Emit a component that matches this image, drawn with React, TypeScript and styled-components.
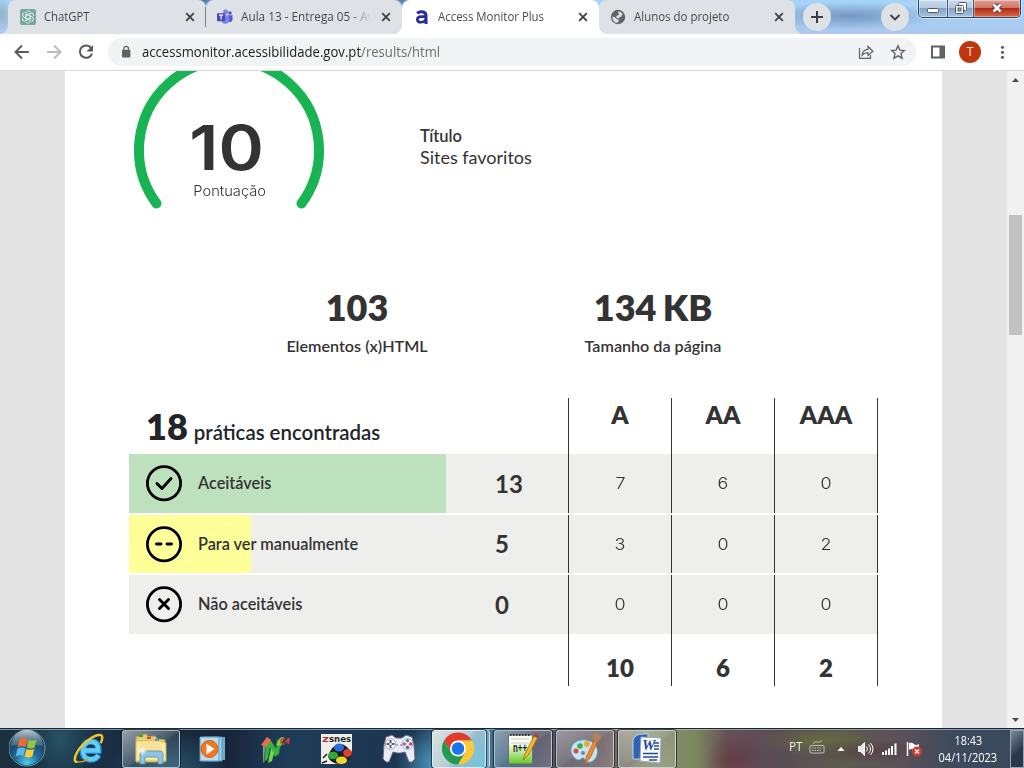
import React from "react";
import styled, { createGlobalStyle, css } from "styled-components";

const GlobalStyle = createGlobalStyle`
  * { box-sizing: border-box; }
  body { margin: 0; overflow: hidden; background: #fff; }
  svg { display: block; flex: none; }
`;

const ui = `"Open Sans", "Noto Sans", sans-serif`;
const lato = `Lato, sans-serif`;
const geo = `Inter, sans-serif`;

const Screen = styled.div`
  width: 1024px;
  height: 768px;
  display: flex;
  flex-direction: column;
  overflow: hidden;
  font-family: ${ui};
`;

/* Text squeezed or stretched horizontally around its origin */
const Fit = styled.span<{ $x: number; $origin?: string }>`
  display: inline-block;
  white-space: nowrap;
  transform: scaleX(${(p) => p.$x});
  transform-origin: ${(p) => p.$origin ?? "left"} center;
`;

/* ---------- Tab strip ---------- */
const TabStrip = styled.header`
  height: 34px;
  flex: none;
  display: flex;
  padding-left: 8px;
  background:
    radial-gradient(ellipse 90px 14px at 850px 16px, rgba(98, 131, 178, 0.75), transparent),
    radial-gradient(ellipse 14px 16px at 1px 14px, rgba(140, 165, 175, 0.7), transparent),
    radial-gradient(ellipse 12px 10px at 205px 0, #4d6f9f, transparent),
    radial-gradient(ellipse 12px 10px at 402px 0, #5277a8, transparent),
    linear-gradient(#a5d4f8, #abc9ee);
`;

const Tab = styled.div<{ $w: number; $pl?: number; $active?: boolean; $flare?: "left" | "right"; $sep?: boolean }>`
  position: relative;
  width: ${(p) => p.$w}px;
  height: 34px;
  display: flex;
  align-items: center;
  padding: 0 11px 0 ${(p) => p.$pl ?? 12}px;
  gap: 8px;
  font-size: 12px;
  color: #45494d;
  background: ${(p) => (p.$active ? "#fff" : "#dee1e6")};
  border-radius: 8px 8px 0 0;
  ${(p) =>
    p.$flare &&
    css`
      &::before {
        content: "";
        position: absolute;
        bottom: 0;
        ${p.$flare}: -8px;
        width: 8px;
        height: 8px;
        background: radial-gradient(circle at ${p.$flare === "left" ? "0 0" : "100% 0"}, transparent 7.5px, #dee1e6 8px);
      }
    `}
  ${(p) =>
    p.$active &&
    css`
      &::before,
      &::after {
        content: "";
        position: absolute;
        bottom: 0;
        width: 8px;
        height: 8px;
      }
      &::before { left: -8px; background: radial-gradient(circle at 0 0, transparent 7.5px, #fff 8px); }
      &::after { right: -8px; background: radial-gradient(circle at 100% 0, transparent 7.5px, #fff 8px); z-index: 2; }
    `}
  ${(p) =>
    p.$sep &&
    css`
      &::after {
        content: "";
        position: absolute;
        right: 0;
        top: 7px;
        width: 1px;
        height: 20px;
        background: #808489;
      }
    `}
`;

const TabTitle = styled.div<{ $fade?: boolean }>`
  flex: 1;
  min-width: 0;
  overflow: hidden;
  line-height: 18px;
  ${(p) => p.$fade && css`mask-image: linear-gradient(90deg, #000 82%, transparent 99%);`}
`;

const StripButton = styled.div<{ $ml: number }>`
  width: 28px;
  height: 28px;
  margin: 3px 0 0 ${(p) => p.$ml}px;
  border-radius: 50%;
  background: #dee1e6;
  display: grid;
  place-items: center;
`;

const WindowButtons = styled.div`
  display: flex;
  width: 103px;
  height: 18px;
  margin-left: 9px;
  border: 1px solid #2b4260;
  border-top: 0;
  border-radius: 0 0 5px 5px;
  overflow: hidden;
  box-shadow: 0 0 0 1px rgba(255, 255, 255, 0.45);
`;

const WinButton = styled.div<{ $w: number; $close?: boolean }>`
  width: ${(p) => p.$w}px;
  display: grid;
  place-items: center;
  border-right: ${(p) => (p.$close ? "0" : "1px solid #3f5a7a")};
  box-shadow: inset 0 0 0 1px rgba(255, 255, 255, 0.4);
  background: ${(p) =>
    p.$close
      ? "linear-gradient(#dfa194 0, #cf7766 45%, #b52b13 50%, #d56a4b 100%)"
      : "linear-gradient(#c9dbea 0, #b4cbe0 45%, #84a3c4 50%, #a9c4de 100%)"};
`;

/* ---------- Toolbar ---------- */
const Toolbar = styled.div`
  height: 37px;
  flex: none;
  display: flex;
  align-items: center;
  padding: 0 0 1px 14px;
  background: #fff;
  border-bottom: 1px solid #d6d8da;
`;

const NavIcons = styled.div`
  display: flex;
  gap: 16px;
  width: 94px;
`;

const Omnibox = styled.div`
  width: 808px;
  height: 28px;
  border-radius: 14px;
  background: #f1f3f4;
  display: flex;
  align-items: center;
  padding: 0 10px 0 12px;
`;

const Url = styled.div`
  flex: 1;
  margin-left: 10px;
  font-size: 14px;
  line-height: 20px;
  color: #202124;
  & em { font-style: normal; color: #6b6f74; }
`;

const OmniActions = styled.div`
  display: flex;
  gap: 16px;
`;

const ToolIcons = styled.div`
  display: flex;
  align-items: center;
  margin-left: 14px;
`;

const Avatar = styled.div`
  width: 22px;
  height: 22px;
  border-radius: 50%;
  margin: 0 17px 0 13px;
  background: #bf360c;
  color: #f3dcd5;
  font: 12px/22px Roboto, sans-serif;
  text-align: center;
`;

/* ---------- Page ---------- */
const Viewport = styled.main`
  height: 657px;
  flex: none;
  display: flex;
  background: #e3e3e3;
`;

const Page = styled.div`
  width: 877px;
  margin-left: 65px;
  background: #fff;
  overflow: hidden;
  color: #333;
  font-family: ${lato};
`;

const ScrollBar = styled.div`
  width: 17px;
  margin-left: auto;
  background: #f1f1f1;
  display: flex;
  flex-direction: column;
  align-items: center;
  padding: 7px 0 6px;
`;

const Thumb = styled.div`
  width: 13px;
  height: 120px;
  margin: 133px 0 auto;
  background: #c1c1c1;
`;

const Summary = styled.section`
  display: flex;
  height: 216px;
  padding-left: 64px;
`;

const Gauge = styled.div`
  width: 200px;
  height: 150px;
  display: grid;
  & > * { grid-area: 1 / 1; }
`;

const Score = styled.div`
  text-align: center;
  padding-top: 47px;
`;

const ScoreNumber = styled.div`
  font: 600 62px/60px ${geo};
  margin-left: -5px;
`;

const ScoreLabel = styled.div`
  font: 300 14px/18px ${geo};
  margin: 4px 0 0 1px;
`;

const SiteTitle = styled.div`
  margin: 55px 0 0 91px;
  font-size: 18px;
  line-height: 21px;
  & strong { display: block; font-size: 16.5px; font-weight: 600; line-height: 21px; }
`;

const Stats = styled.section`
  display: flex;
  padding-left: 162px;
  gap: 36px;
  height: 111px;
`;

const Stat = styled.div`
  width: 260px;
  text-align: center;
  font-weight: 600;
  font-size: 16.15px;
  line-height: 20px;
`;

const StatValue = styled.div`
  font-size: 36px;
  line-height: 40px;
  font-weight: 800;
  margin-bottom: 9px;
  word-spacing: -2px;
`;

const Table = styled.section`
  width: 749px;
  margin-left: 64px;
`;

const Row = styled.div<{ $h: number; $gap?: boolean; $shade?: boolean }>`
  display: grid;
  grid-template-columns: 439px 103px 103px 104px;
  height: ${(p) => p.$h}px;
  margin-bottom: ${(p) => (p.$gap ? 2 : 0)}px;
  background: ${(p) => (p.$shade ? "#eeeeec" : "#fff")};
`;

const Level = styled.div<{ $kind: "head" | "cell" | "foot" }>`
  border-left: 1px solid #333;
  text-align: center;
  &:last-child { border-right: 1px solid #333; }
  ${(p) => p.$kind === "head" && css`font: 800 24.5px/30px ${lato}; padding-top: 2px;`}
  ${(p) => p.$kind === "cell" && css`font: 300 16px/20px ${geo}; padding-top: 19px;`}
  ${(p) => p.$kind === "foot" && css`font: 800 24px/30px ${lato}; padding-top: 19px;`}
`;

const Found = styled.div`
  padding: 5px 0 0 17px;
  color: #212529;
  font-size: 20.4px;
  font-weight: 600;
  line-height: 46px;
  & b { font-size: 36px; font-weight: 800; margin-right: 6px; }
`;

const Practice = styled.div<{ $fill: number; $color: string }>`
  display: flex;
  align-items: center;
  padding-left: 17px;
  font-size: 16.3px;
  font-weight: 600;
  background: linear-gradient(${(p) => p.$color}, ${(p) => p.$color}) left / ${(p) => p.$fill}px 100% no-repeat;
`;

const PracticeName = styled.div`
  width: 297px;
  margin-left: 15px;
  padding-bottom: 2px;
`;

const PracticeCount = styled.div`
  font-size: 24px;
  font-weight: 700;
  padding-bottom: 1px;
`;

/* ---------- Taskbar ---------- */
const Taskbar = styled.footer`
  height: 40px;
  flex: none;
  display: flex;
  padding-left: 9px;
  border-top: 1px solid #182735;
  box-shadow: inset 0 1px 0 rgba(190, 210, 225, 0.6);
  background:
    radial-gradient(ellipse 45px 40px at 440px 36px, rgba(90, 190, 235, 0.75), transparent),
    radial-gradient(ellipse 60px 40px at 170px 40px, rgba(45, 105, 135, 0.7), transparent),
    radial-gradient(ellipse 35px 50px at 60px 10px, rgba(45, 95, 115, 0.7), transparent),
    radial-gradient(ellipse 30px 24px at 735px 30px, rgba(100, 50, 60, 0.6), transparent),
    radial-gradient(ellipse 70px 12px at 870px 22px, rgba(85, 50, 60, 0.5), transparent),
    radial-gradient(ellipse 60px 15px at 820px 12px, rgba(105, 112, 60, 0.8), transparent),
    linear-gradient(90deg, #19303f 0, #1a3045 9%, #182438 22%, #1e3c58 28%, #1d3550 40%, #3e7898 47%, #3f6480 49%, #4d5068 52%, #5e5a66 55%, #6c5f62 59%, #8b9175 63%, #7c865e 68%, #664f55 71%, #594c55 76%, #5b5a50 82%, #5b5058 88%, #3d4a5d 93%, #39485b 100%);
`;

const Orb = styled.div`
  width: 49px;
`;

const TaskItem = styled.div<{ $open?: "dark" | "light" | "active" }>`
  width: 58px;
  height: 38px;
  margin: 1px 2px 0;
  display: grid;
  place-items: center;
  ${(p) =>
    p.$open &&
    css`
      border: 1px solid ${p.$open === "active" ? "#e2ecf0" : "rgba(225, 232, 235, 0.65)"};
      border-radius: 3px;
      box-shadow: 0 0 0 1px rgba(20, 25, 35, 0.7);
      background: ${p.$open === "active"
        ? "linear-gradient(125deg, #dee3e2 0, #b7cdd4 48%, #93bdcc 60%, #70c5e6 100%)"
        : p.$open === "dark"
        ? "linear-gradient(145deg, rgba(255,255,255,.55) 0, rgba(220,230,235,.25) 48%, rgba(190,200,210,.14) 55%, rgba(190,200,210,.16))"
        : "linear-gradient(145deg, rgba(255,255,255,.38) 0, rgba(255,255,255,.18) 48%, rgba(255,255,255,.1) 54%, rgba(255,255,255,.16))"};
    `}
`;

const ChromeStack = styled(TaskItem)`
  width: 54px;
  margin-right: 6px;
  box-shadow: 0 0 0 1px rgba(20, 25, 35, 0.7), 3px 0 0 0 #73a3b9, 4px 0 0 0 #cde0e6;
`;

const Tray = styled.div`
  margin-left: auto;
  display: flex;
  align-items: center;
  color: #eef0ee;
  font-size: 12px;
`;

const Language = styled.div`
  padding-bottom: 5px;
`;

const Clock = styled.div`
  width: 74px;
  margin-left: 8px;
  text-align: center;
  line-height: 17px;
  padding-top: 1px;
  color: #fff;
`;

const ShowDesktop = styled.div`
  width: 14px;
  height: 38px;
  margin-left: 5px;
  border: 1px solid #98a3b0;
  background: linear-gradient(135deg, rgba(170, 185, 200, 0.6), rgba(35, 45, 65, 0.7) 60%);
`;

const Close = () => (
  <svg width="10" height="10" viewBox="0 0 10 10" stroke="#3c4043" strokeWidth="1.8"><path d="M1.200 1.200l7.600 7.600M8.800 1.200L1.200 8.800" /></svg>
);

const OpenAIIcon = () => (
  <svg width="16" height="16" viewBox="0 0 16 16">
    <rect width="16" height="16" rx="2" fill="#75a99b" />
    <g fill="none" stroke="#e9f4f1" strokeWidth=".9">
      {[0, 60, 120, 180, 240, 300].map((a) => (
        <path key={a} transform={`rotate(${a} 8 8)`} d="M5.900 6.800V4.100a2.400 2.400 0 0 1 4.200-1.300M8 5.500l2.200 1.300v3" />
      ))}
    </g>
  </svg>
);

const TeamsIcon = () => (
  <svg width="16" height="16" viewBox="0 0 16 16">
    <circle cx="13" cy="4" r="1.8" fill="#5059c9" />
    <path d="M10.500 6.300h5v4.200a2.600 2.600 0 0 1-5 1z" fill="#5059c9" />
    <circle cx="8.600" cy="3" r="2.500" fill="#7b83eb" />
    <path d="M4.500 6.300h7.800v4.800a4 4 0 0 1-7.800 1z" fill="#7b83eb" />
    <rect y="4.300" width="8" height="8" rx=".8" fill="#4149b8" />
    <path d="M2 6.200h4.200M4.100 6.200v4.400" stroke="#fff" strokeWidth="1.200" />
  </svg>
);

const AccessIcon = () => (
  <svg width="16" height="16" viewBox="0 0 16 16" fill="none" stroke="#2b2c9c" strokeWidth="3">
    <path d="M3.200 4.400Q5 2.600 8 2.800q4 .2 4 4V15" />
    <path d="M12 7.600H7.200Q3.300 7.800 3.300 10.600 3.500 13.300 7 13.300 10 13.200 12 10.500" strokeWidth="2.600" />
  </svg>
);

const GlobeIcon = () => (
  <svg width="16" height="16" viewBox="0 0 16 16">
    <circle cx="8" cy="8" r="7.200" fill="#5f6368" />
    <path d="M8.400 2.200c2 .3 3.900 1.600 4.500 3.400l-1 .5-.8 1.800-1.500.2-.6 1.400-1.800-.3-1.200-1.300 1.100-1.400 1.700-.4.4-1.200-1.200-.7zM2.200 7.400l3 1 1.300 1.700 2.200.7.2 1.400-1.800 1.600C4.500 13.300 2.400 11.400 2.200 7.400z" fill="#dee1e6" />
  </svg>
);

const NavArrow = ({ forward }: { forward?: boolean }) => (
  <svg width="16" height="16" viewBox="0 0 16 16" fill="none" stroke={forward ? "#b8babd" : "#55595e"} strokeWidth="1.900">
    {forward ? <path d="M1.200 8h13M8 1.500L14.500 8 8 14.500" /> : <path d="M14.800 8h-13M8 1.500L1.500 8 8 14.500" />}
  </svg>
);

const StatusIcon = ({ d }: { d: string }) => (
  <svg width="37" height="37" viewBox="0 0 37 37" fill="none" stroke="#000" strokeLinecap="round" strokeLinejoin="round">
    <circle cx="18" cy="18.300" r="16.600" strokeWidth="2.800" />
    <path d={d} strokeWidth="2.900" />
  </svg>
);

const StartOrb = () => (
  <svg width="38" height="38" viewBox="0 0 38 38">
    <defs>
      <radialGradient id="orb" cx=".5" cy=".95" r=".8"><stop stopColor="#4fd0ee" /><stop offset=".45" stopColor="#216e9c" /><stop offset="1" stopColor="#17384f" /></radialGradient>
      <linearGradient id="orbGlass" x2="0" y2="1"><stop stopColor="#d5e3e9" stopOpacity=".85" /><stop offset="1" stopColor="#7fa2b5" stopOpacity=".35" /></linearGradient>
    </defs>
    <circle cx="18" cy="19" r="18" fill="#12344a" stroke="#6fa0b5" />
    <circle cx="18" cy="19" r="17" fill="url(#orb)" />
    <path d="M2 17a16 16 0 0 1 32 0q-16-3-32 0z" fill="url(#orbGlass)" />
    <path d="M10.500 10.500q4-2.500 8-.5l-1.800 8q-4-1.800-8 .4z" fill="#ee6a2c" />
    <path d="M19.600 10.700q4 1.800 8 0l-2 7.800q-3.800 1.800-7.900 0z" fill="#92c63e" />
    <path d="M8.400 19.700q4-2.200 8-.4l-2 7.800q-3.800-1.700-7.800.4z" fill="#58b6ea" />
    <path d="M17.400 19.900q4 1.800 7.900 0l-2 7.700q-3.900 2-7.800 0z" fill="#fdca3c" />
  </svg>
);

const IeIcon = () => (
  <svg width="34" height="34" viewBox="0 0 34 34" fill="none">
    <path d="M26.500 23c-1.600 3.500-5 5-8.700 4.600-5.500-.6-7.600-5-7.200-9.600.4-5 3.800-8.600 8.300-8.600 5.300 0 8 3.600 7.700 9.400H11" stroke="#1e86c8" strokeWidth="6.200" />
    <path d="M26.200 23c-1.600 3.200-5 4.600-8.400 4.200-5.200-.6-7.200-4.800-6.800-9.200.4-4.700 3.600-8.200 7.900-8.200 5 0 7.600 3.400 7.300 8.700H11" stroke="#61cdf6" strokeWidth="4.400" />
    <path d="M5.500 29.500C2 31 1.800 26 5.500 19.500 11 10 24 1.500 29 3.200c2 .8 1.700 4-.4 8" stroke="#f4c727" strokeWidth="2.400" />
    <path d="M5 29.800c5 1 9-1.500 11-3" stroke="#d79c13" strokeWidth="1.500" />
  </svg>
);

const FolderIcon = () => (
  <svg width="34" height="32" viewBox="0 0 34 32">
    <path d="M2 4l10-3 2 3 7-1 2 3 8 1v22H2z" fill="#e9cd76" stroke="#c9a547" />
    <path d="M5 2h4v2H5z" fill="#20b321" /><path d="M13 4h4v2h-4z" fill="#d84a2c" /><path d="M21 6h4v2h-4z" fill="#2f9be0" />
    <path d="M2 8h22l8 2v18H2z" fill="#fae9a5" stroke="#d6b85e" strokeWidth=".8" />
    <path d="M6 11h20M6 14h22M6 17h22" stroke="#eed584" />
    <path d="M6 31V21q0-3 3-3h17q3 0 3 3v10h-5v-7H11v7z" fill="#8fc3e2" stroke="#4f8fb5" strokeWidth=".8" />
    <path d="M8.500 14v8M4.500 18h8M6 15.500l5 5M11 15.500l-5 5" stroke="#fff" />
  </svg>
);

const MediaIcon = () => (
  <svg width="28" height="28" viewBox="0 0 28 28">
    <path d="M8 2h18v23H8z" fill="#71add0" /><path d="M5 2h18v24H5z" fill="#a6d3e9" stroke="#4e91b8" /><path d="M1 2h19v24H1z" fill="#b9ddef" stroke="#5a9bbf" />
    <circle cx="10.500" cy="14" r="8.500" fill="#ef7623" stroke="#d25b12" />
    <path d="M7.500 8.500v11l8-5.500z" fill="#fff" />
  </svg>
);

const NIcon = () => (
  <svg width="30" height="32" viewBox="0 0 30 32">
    <path d="M3 13l5-3-1 15-4 5z" fill="#8b9ba4" />
    <path d="M6 9l4-3 6 9 1-8 5-3-3 17-4 3-5-9-2 11-4 3z" fill="#3cb043" stroke="#1b6a2d" strokeWidth=".8" />
    <path d="M1 12l6-8 4 3-5 7z" fill="#ec6a50" /><path d="M9 25l2-10 3 5-2 8-4 2z" fill="#73d355" />
    <path d="M16 12l4-7 4-1-3 9z" fill="#8ecb45" />
    <path d="M25 6q-4-1-4 2.500t4 2M29 5l-3 3.500h3.500M29 5l-.8 6" fill="none" stroke="#d5412f" strokeWidth="1.700" />
  </svg>
);

const ZsnesText = styled.text`
  font: 700 9.5px "DejaVu Sans", sans-serif;
`;

const ZsnesIcon = () => (
  <svg width="32" height="32" viewBox="0 0 32 32">
    <path d="M0 1h31v17L20 31H0z" fill="#eeeeea" />
    <ZsnesText x="1" y="9" fill="#c42e35" textLength="7" lengthAdjust="spacingAndGlyphs">z</ZsnesText>
    <ZsnesText x="8" y="9" fill="#262626" textLength="22" lengthAdjust="spacingAndGlyphs">snes</ZsnesText>
    <path d="M2 25l4-4M1 30l5-2" stroke="#222" strokeWidth="1.500" />
    <path d="M7 24Q10 12 19 11q6 0 12 9-1 8-12 11-9 0-12-7z" fill="#1b2020" />
    <ellipse cx="18" cy="14.500" rx="5" ry="4" fill="#2c6be2" /><ellipse cx="26.500" cy="20" rx="4.300" ry="4" fill="#e63d31" />
    <ellipse cx="12" cy="22.500" rx="5" ry="3.800" fill="#32a938" /><ellipse cx="20.500" cy="27.200" rx="5.500" ry="3.800" fill="#f0d62c" />
  </svg>
);

const GamepadIcon = () => (
  <svg width="34" height="30" viewBox="0 0 34 30">
    <path d="M4 3l6-2 4 3h6l4-3 6 2 2 8 1 14-3 3h-3l-4-10-4 1h-4l-4-1-4 10H4l-3-3L2 11z" fill="#ecebf3" stroke="#65658a" />
    <circle cx="8.500" cy="10" r="5.300" fill="#f9f9fc" stroke="#a9a8bb" /><circle cx="25.500" cy="10" r="5.300" fill="#f9f9fc" stroke="#a9a8bb" />
    <path d="M8.500 6v3M8.500 11v3M4.500 10h3M9.500 10h3" stroke="#555980" strokeWidth="2" />
    <circle cx="25.500" cy="6.800" r="1.700" fill="#269b80" /><circle cx="22.500" cy="10" r="1.700" fill="#c65b98" /><circle cx="28.500" cy="10" r="1.700" fill="#dc3e4d" /><circle cx="25.500" cy="13.200" r="1.700" fill="#5168b7" />
    <path d="M14 11h2M18 11h2" stroke="#777" />
  </svg>
);

const ChromeIcon = () => (
  <svg width="34" height="34" viewBox="-16 -16.500 34 34">
    <path d="M-13.860-8A16 16 0 0 1 13.860-8H0L-6.930 4z" fill="#e33b2e" />
    <path d="M13.860-8A16 16 0 0 1 0 16L6.930 4 0-8z" fill="#fcc934" />
    <path d="M0 16A16 16 0 0 1-13.860-8L-6.930 4H6.930z" fill="#229a50" />
    <circle r="8" fill="#fff" /><circle r="6.300" fill="#1a73e8" />
  </svg>
);

const NotepadText = styled.text`
  font: 700 13px "Liberation Sans", sans-serif;
`;

const NotepadIcon = () => (
  <svg width="32" height="34" viewBox="0 0 32 34">
    <defs><linearGradient id="npp" x2="0" y2="1"><stop offset=".3" stopColor="#fbfdf5" /><stop offset="1" stopColor="#60c921" /></linearGradient></defs>
    <path d="M1.500 3h24v29h-24z" fill="url(#npp)" stroke="#667065" />
    <path d="M3 3h21" stroke="#333" strokeWidth="2" strokeDasharray="1.500 1.500" />
    <path d="M4 7h18M4 11h18" stroke="#c8cdc8" />
    <NotepadText x="6" y="20" fill="#20221c" textLength="14" lengthAdjust="spacingAndGlyphs">n++</NotepadText>
    <path d="M16 28l2-6L27 4l3.500 2-9 17z" fill="#f2b92d" stroke="#a46a17" strokeWidth=".8" />
    <path d="M27 4l1.500-3L32 3l-1.500 3z" fill="#b23d43" />
  </svg>
);

const PaintIcon = () => (
  <svg width="32" height="34" viewBox="0 0 32 34">
    <path d="M2 20C1 12 8 7 17 8s13 8 11 15-9 9-11 6c-2-3-3-4-5-2-3 3-8-1-10-7z" fill="#c5e5f3" stroke="#5ba1c6" />
    <circle cx="7" cy="19" r="2.500" fill="#e4483c" /><circle cx="11" cy="14" r="2.800" fill="#3fae49" /><circle cx="18" cy="12" r="3" fill="#f2a62f" />
    <circle cx="14" cy="21" r="2" fill="#6f8794" />
    <path d="M15.500 33l2-9 7.500-15 3 1.500-6 14z" fill="#ee8833" stroke="#b65a1a" strokeWidth=".7" />
    <path d="M25 9l-1-6 3-2 4 1 1 4-4 4.500z" fill="#bb8156" />
  </svg>
);

const WordText = styled.text`
  font: italic 700 15px "Liberation Serif", serif;
`;

const WordIcon = () => (
  <svg width="32" height="32" viewBox="0 0 32 32">
    <path d="M2 7Q4 1 12 1h5v25H2z" fill="#2e63b3" stroke="#bed3ee" />
    <path d="M10 4l20 1-1 25-20-2z" fill="#fafcff" stroke="#9aacc8" />
    <WordText x="11" y="17" fill="#1f499a" textLength="13">W</WordText>
    <path d="M23 10h5M23 13h5M23 16h5M12 20.500h15M12 24h15M18 27h8" stroke="#234b92" strokeWidth="1.600" />
  </svg>
);

const TrayIcons = styled.div`
  display: flex;
  align-items: center;
  gap: 8px;
  margin-left: 6px;
`;

const practices = [
  { name: "Aceitáveis", count: 13, fill: 317, color: "#bde1bc", h: 59, levels: [7, 6, 0], d: "M11 18.500l5 5L25 13.500" },
  { name: "Para ver manualmente", count: 5, fill: 122, color: "#ffff99", h: 58, levels: [3, 0, 2], d: "M10.500 18H15M21 18h4.500" },
  { name: "Não aceitáveis", count: 0, fill: 0, color: "#eeeeec", h: 59, levels: [0, 0, 0], d: "M13.500 13.500l9 9M22.500 13.500l-9 9" },
];

export default function App() {
  return (
    <Screen>
      <GlobalStyle />
      <TabStrip>
        <Tab $w={198} $flare="left" $sep><OpenAIIcon /><TabTitle><Fit $x={0.94}>ChatGPT</Fit></TabTitle><Close /></Tab>
        <Tab $w={196} $pl={11}><TeamsIcon /><TabTitle $fade><Fit $x={0.98}>Aula 13 - Entrega 05 - Av</Fit></TabTitle><Close /></Tab>
        <Tab $w={197} $active><AccessIcon /><TabTitle><Fit $x={0.95}>Access Monitor Plus</Fit></TabTitle><Close /></Tab>
        <Tab $w={196} $pl={11} $flare="right"><GlobeIcon /><TabTitle><Fit $x={0.955}>Alunos do projeto</Fit></TabTitle><Close /></Tab>
        <StripButton $ml={8}><svg width="14" height="14" viewBox="0 0 14 14" stroke="#3c4043" strokeWidth="2"><path d="M7 1v12M1 7h12" /></svg></StripButton>
        <StripButton $ml={50}><svg width="12" height="12" viewBox="0 0 12 12" fill="none" stroke="#3c4043" strokeWidth="1.900"><path d="M1.500 4L6 8.500 10.500 4" /></svg></StripButton>
        <WindowButtons>
          <WinButton $w={29}><svg width="14" height="18" viewBox="0 0 14 18"><rect x="1.500" y="8.500" width="11" height="4" rx="1" fill="#fff" stroke="#505868" /></svg></WinButton>
          <WinButton $w={26}>
            <svg width="14" height="18" viewBox="0 0 14 18" fill="#fff" stroke="#505868"><rect x="4.500" y="2.500" width="8" height="8" rx="1" /><rect x="1.500" y="5.500" width="8" height="8" rx="1" /><rect x="4" y="8" width="3" height="3" fill="#8ba" /></svg>
          </WinButton>
          <WinButton $w={46} $close>
            <svg width="14" height="18" viewBox="0 0 14 18"><g fill="none"><path d="M3.500 4.500l7 7M10.500 4.500l-7 7" stroke="#5d3b42" strokeWidth="4.600" /><path d="M3.500 4.500l7 7M10.500 4.500l-7 7" stroke="#fff" strokeWidth="2.600" /></g></svg>
          </WinButton>
        </WindowButtons>
      </TabStrip>

      <Toolbar>
        <NavIcons>
          <NavArrow />
          <NavArrow forward />
          <svg width="16" height="16" viewBox="0 0 16 16"><path d="M13.300 4.200A6.200 6.200 0 1 0 14 9.600" fill="none" stroke="#55595e" strokeWidth="2" /><path d="M15 1v6.500H8.500z" fill="#55595e" /></svg>
        </NavIcons>
        <Omnibox>
          <svg width="12" height="14" viewBox="0 0 12 14"><rect x="2" y="4.800" width="8.400" height="7.600" rx="1" fill="#5f6368" /><path d="M3.900 5V3.600a2.300 2.300 0 0 1 4.600 0V5" fill="none" stroke="#5f6368" strokeWidth="1.300" /></svg>
          <Url><Fit $x={0.937}>accessmonitor.acessibilidade.gov.pt<em>/results/html</em></Fit></Url>
          <OmniActions>
            <svg width="16" height="16" viewBox="0 0 16 16" fill="none" stroke="#5f6368" strokeWidth="1.200"><path d="M1.500 4v10.400h11V11" /><path d="M4 11.300q.5-5.500 6-6V2.500l5 4.700-5 4.300V8.700Q6.500 8.500 4 11.300z" /></svg>
            <svg width="16" height="16" viewBox="0 0 16 16" fill="none" stroke="#5f6368" strokeWidth="1.400"><path d="M8 1.800l1.900 4.300 4.600.4-3.500 3.100 1.100 4.600L8 11.800l-4.100 2.400L5 9.600 1.500 6.500l4.600-.4z" /></svg>
          </OmniActions>
        </Omnibox>
        <ToolIcons>
          <svg width="16" height="16" viewBox="0 0 16 16"><path d="M1 1.500h14v13H1zM3 3.500v9h6.500v-9z" fill="#5f6368" fillRule="evenodd" /></svg>
          <Avatar>T</Avatar>
          <svg width="10" height="14" viewBox="0 0 10 14" fill="#5f6368"><circle cx="4.500" cy="2.300" r="1.600" /><circle cx="4.500" cy="7.300" r="1.600" /><circle cx="4.500" cy="12.300" r="1.600" /></svg>
        </ToolIcons>
      </Toolbar>

      <Viewport>
        <Page>
          <Summary>
            <Gauge>
              <svg width="200" height="150" viewBox="129 71 200 150"><path d="M156.500 203.500A90 90 0 1 1 301.500 203.500" fill="none" stroke="#18b454" strokeWidth="10" strokeLinecap="round" /></svg>
              <Score>
                <ScoreNumber><Fit $x={1.11} $origin="center">10</Fit></ScoreNumber>
                <ScoreLabel><Fit $x={1.05} $origin="center">Pontuação</Fit></ScoreLabel>
              </Score>
            </Gauge>
            <SiteTitle><strong>Título</strong>Sites favoritos</SiteTitle>
          </Summary>
          <Stats>
            <Stat><StatValue>103</StatValue>Elementos (x)HTML</Stat>
            <Stat><StatValue>134 KB</StatValue>Tamanho da página</Stat>
          </Stats>
          <Table>
            <Row $h={56}>
              <Found><b>18</b>práticas encontradas</Found>
              {["A", "AA", "AAA"].map((l) => <Level key={l} $kind="head">{l}</Level>)}
            </Row>
            {practices.map((p, i) => (
              <Row key={p.name} $h={p.h} $gap={i < 2} $shade>
                <Practice $fill={p.fill} $color={p.color}>
                  <StatusIcon d={p.d} />
                  <PracticeName>{p.name}</PracticeName>
                  <PracticeCount>{p.count}</PracticeCount>
                </Practice>
                {p.levels.map((n, j) => <Level key={j} $kind="cell"><Fit $x={1.12} $origin="center">{n}</Fit></Level>)}
              </Row>
            ))}
            <Row $h={52}>
              <div />
              {[10, 6, 2].map((n) => <Level key={n} $kind="foot">{n}</Level>)}
            </Row>
          </Table>
        </Page>
        <ScrollBar>
          <svg width="7" height="4" viewBox="0 0 7 4"><path d="M0 4l3.500-4L7 4z" fill="#505050" /></svg>
          <Thumb />
          <svg width="7" height="4" viewBox="0 0 7 4"><path d="M0 0l3.500 4L7 0z" fill="#505050" /></svg>
        </ScrollBar>
      </Viewport>

      <Taskbar>
        <Orb><StartOrb /></Orb>
        <TaskItem><IeIcon /></TaskItem>
        <TaskItem $open="dark"><FolderIcon /></TaskItem>
        <TaskItem><MediaIcon /></TaskItem>
        <TaskItem><NIcon /></TaskItem>
        <TaskItem><ZsnesIcon /></TaskItem>
        <TaskItem><GamepadIcon /></TaskItem>
        <ChromeStack $open="active"><ChromeIcon /></ChromeStack>
        <TaskItem $open="light"><NotepadIcon /></TaskItem>
        <TaskItem $open="light"><PaintIcon /></TaskItem>
        <TaskItem $open="light"><WordIcon /></TaskItem>
        <Tray>
          <Language><Fit $x={0.98}>PT</Fit></Language>
          <TrayIcons>
            <svg width="16" height="18" viewBox="0 0 16 18" fill="none" stroke="#bcc0b9"><path d="M4 4q1-3 4-2t5-1.500" /><rect x="1" y="5.500" width="14" height="7.500" rx="1" /><path d="M3 8h10M3 10.500h10" strokeDasharray="1.500 1" /></svg>
            <svg width="16" height="16" viewBox="0 0 16 16"><path d="M4.500 10L8 6l3.500 4z" fill="#fff" /></svg>
            <svg width="17" height="16" viewBox="0 0 17 16" fill="none" stroke="#fff"><path d="M1.500 5.500h2l4-4v13l-4-4h-2z" fill="#e9eceb" /><path d="M9.500 5.500q2 2.500 0 5M11.500 3.500q4 4.500 0 9M13.500 2q5 6 0 12" /></svg>
            <svg width="16" height="14" viewBox="0 0 16 14" fill="#fff"><path d="M0 10h2v3H0zM3 8.500h2V13H3zM6 6.500h2V13H6zM9 4h2v9H9zM12.500 1.500h2V13h-2z" /></svg>
            <svg width="17" height="16" viewBox="0 0 17 16"><path d="M1.500 1v14" stroke="#fff" strokeWidth="1.500" /><path d="M3 2q3-1 5 1t5 0v7q-3 1-5-1t-5 0z" fill="#fff" /><circle cx="11" cy="10.500" r="5" fill="#d8392f" /><path d="M9 8.500l4 4M13 8.500l-4 4" stroke="#fff" strokeWidth="1.500" /></svg>
          </TrayIcons>
          <Clock><Fit $x={0.9} $origin="center">18:43</Fit><br /><Fit $x={0.92} $origin="center">04/11/2023</Fit></Clock>
          <ShowDesktop />
        </Tray>
      </Taskbar>
    </Screen>
  );
}
